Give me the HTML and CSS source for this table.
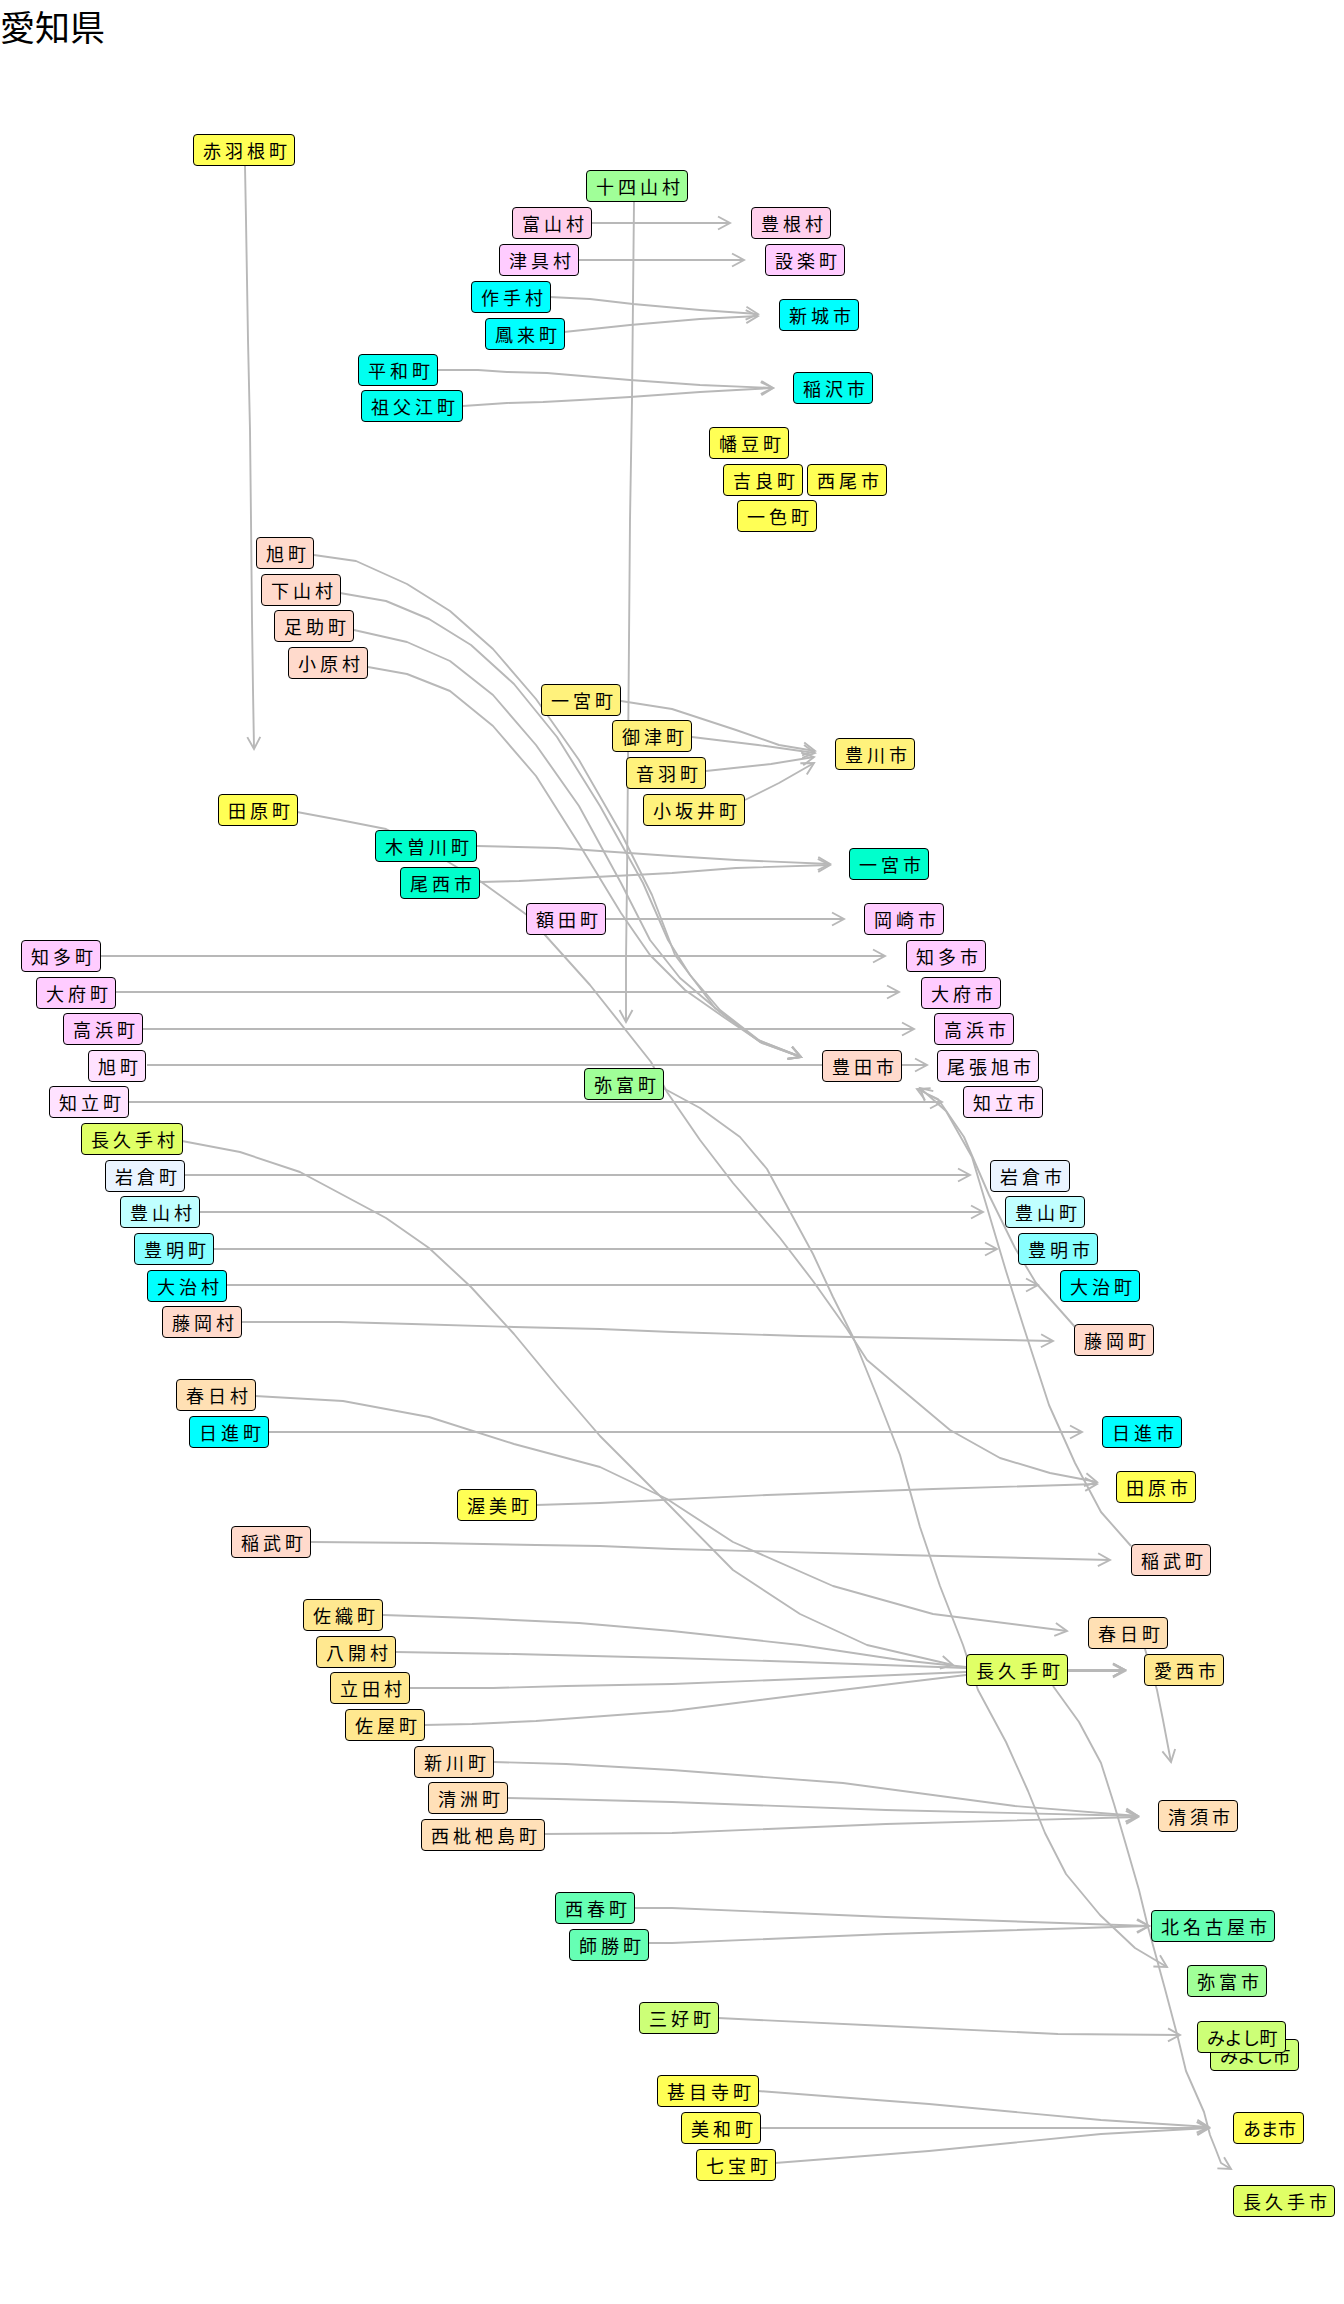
FILE: index.html
```html
<!DOCTYPE html>
<html lang="ja">
<head>
<meta charset="utf-8">
<title>愛知県</title>
<link rel="stylesheet" href="styles.css">
</head>
<body>
<div class="page">
  <h1 class="title">愛知県</h1>

  <svg class="links" width="1344" height="2304" viewBox="0 0 1344 2304" xmlns="http://www.w3.org/2000/svg">
    <defs>
      <marker id="ah" markerUnits="userSpaceOnUse" markerWidth="16" markerHeight="16" refX="13" refY="7" orient="auto" overflow="visible">
        <path class="ahp" d="M1,0.5 L13,7 L1,13.5"/>
      </marker>
    </defs>
    <polyline class="e" points="245,166 246,220 247,280 248,340 250,430 251,520 252,620 253,690 254,749"/>
    <polyline class="e" points="634,202 633,300 632,400 630,520 629,640 628,760 627,880 626,960 626,1022"/>
    <polyline class="e" points="592,223 730,223"/>
    <polyline class="e" points="578,260 744,260"/>
    <polyline class="e" points="550,297 590,299 633,304 700,310 758,314"/>
    <polyline class="e" points="564,332 630,325 700,319 758,316"/>
    <polyline class="e" points="437,370 478,370 507,372 547,373 630,380 700,385 773,388"/>
    <polyline class="e" points="463,406 507,403 543,402 580,400 630,397 700,392 773,388"/>
    <polyline class="e" points="314,555 356,561 407,584 450,611 493,649 536,699 579,760 621,833 652,895 675,955 715,1008 758,1040 801,1057"/>
    <polyline class="e" points="340,593 386,601 429,619 471,645 514,684 557,737 600,806 643,883 668,940 690,975 720,1010 760,1041 801,1057"/>
    <polyline class="e" points="354,630 407,642 450,661 493,695 536,745 579,806 621,883 650,940 680,978 720,1012 760,1042 801,1057"/>
    <polyline class="e" points="368,667 407,674 450,691 493,726 536,776 579,844 621,913 650,955 685,990 725,1018 762,1043 801,1057"/>
    <polyline class="e" points="621,701 672,709 736,730 779,745 815,751"/>
    <polyline class="e" points="692,737 758,745 815,753"/>
    <polyline class="e" points="706,771 771,764 814,757"/>
    <polyline class="e" points="745,800 779,783 814,763"/>
    <polyline class="e" points="297,812 340,820 386,829 430,851 480,881 527,915 590,985 651,1062 667,1092 700,1140 733,1183 780,1238 813,1281 847,1329 867,1360 900,1388 950,1430 1000,1458 1050,1473 1097,1482"/>
    <polyline class="e" points="477,846 557,848 672,856 736,860 830,864"/>
    <polyline class="e" points="480,882 519,881 672,873 736,868 830,865"/>
    <polyline class="e" points="606,919 844,919"/>
    <polyline class="e" points="101,956 885,956"/>
    <polyline class="e" points="114,992 899,992"/>
    <polyline class="e" points="143,1029 914,1029"/>
    <polyline class="e" points="147,1065 927,1065"/>
    <polyline class="e" points="129,1102 942,1102"/>
    <polyline class="e" points="663,1088 700,1108 740,1137 767,1169 787,1206 813,1254 833,1297 853,1337 877,1396 900,1455 920,1527 940,1586 963,1645 978,1690 1006,1742 1028,1791 1045,1833 1066,1874 1100,1915 1135,1948 1167,1967"/>
    <polyline class="e" points="182,1141 240,1152 300,1172 386,1218 429,1248 471,1287 514,1334 557,1386 600,1436 667,1503 733,1570 800,1614 867,1645 953,1665"/>
    <polyline class="e" points="185,1175 970,1175"/>
    <polyline class="e" points="199,1212 983,1212"/>
    <polyline class="e" points="213,1249 997,1249"/>
    <polyline class="e" points="227,1285 1038,1285"/>
    <polyline class="e" points="241,1322 339,1322 412,1324 514,1327 600,1329 672,1332 800,1336 1053,1341"/>
    <polyline class="e" points="1075,1327 1036,1283 1015,1248 989,1195 964,1137 938,1099 917,1089"/>
    <polyline class="e" points="1131,1546 1101,1512 1075,1463 1049,1405 1023,1325 1006,1271 989,1214 972,1157 946,1111 920,1088"/>
    <polyline class="e" points="255,1396 343,1401 429,1417 514,1444 600,1467 667,1499 733,1542 833,1586 933,1614 1067,1631"/>
    <polyline class="e" points="268,1432 1082,1432"/>
    <polyline class="e" points="536,1505 600,1503 767,1495 933,1489 1097,1484"/>
    <polyline class="e" points="311,1542 429,1543 536,1545 600,1546 672,1549 900,1555 1110,1560"/>
    <polyline class="e" points="383,1615 472,1618 579,1623 672,1631 800,1645 900,1660 966,1667 1066,1670 1125,1670"/>
    <polyline class="e" points="396,1652 514,1654 672,1658 800,1662 966,1668 1066,1670 1125,1670"/>
    <polyline class="e" points="409,1688 493,1688 566,1686 672,1684 800,1679 966,1672 1066,1670 1125,1670"/>
    <polyline class="e" points="424,1725 472,1724 536,1721 672,1711 800,1695 966,1675 1066,1671 1125,1671"/>
    <polyline class="e" points="1145,1649 1157,1690 1163,1720 1171,1762"/>
    <polyline class="e" points="494,1762 566,1764 672,1770 843,1783 1015,1806 1138,1816"/>
    <polyline class="e" points="508,1798 557,1799 672,1802 886,1810 1138,1816"/>
    <polyline class="e" points="544,1834 672,1833 886,1824 1138,1817"/>
    <polyline class="e" points="634,1908 672,1908 886,1917 1149,1926"/>
    <polyline class="e" points="648,1943 672,1943 886,1934 1149,1926"/>
    <polyline class="e" points="1053,1686 1079,1722 1101,1763 1114,1804 1126,1845 1139,1890 1148,1927 1165,1989 1178,2038 1186,2071 1204,2112 1210,2135 1216,2150 1221,2163 1231,2169"/>
    <polyline class="e" points="718,2018 886,2026 1058,2034 1180,2035"/>
    <polyline class="e" points="758,2091 929,2104 1101,2120 1209,2127"/>
    <polyline class="e" points="760,2128 1209,2128"/>
    <polyline class="e" points="775,2163 929,2151 1101,2134 1209,2128"/>
  </svg>

  <div class="n y1" style="left:193px;top:134px">赤羽根町</div>
  <div class="n g1" style="left:586px;top:170px">十四山村</div>
  <div class="n p1" style="left:512px;top:207px">富山村</div>
  <div class="n p1" style="left:751px;top:207px">豊根村</div>
  <div class="n p2" style="left:499px;top:244px">津具村</div>
  <div class="n p2" style="left:765px;top:244px">設楽町</div>
  <div class="n c1" style="left:471px;top:281px">作手村</div>
  <div class="n c1" style="left:485px;top:318px">鳳来町</div>
  <div class="n c1" style="left:779px;top:299px">新城市</div>
  <div class="n c2" style="left:358px;top:354px">平和町</div>
  <div class="n c2" style="left:361px;top:390px">祖父江町</div>
  <div class="n c2" style="left:793px;top:372px">稲沢市</div>
  <div class="n y1" style="left:709px;top:427px">幡豆町</div>
  <div class="n y1" style="left:723px;top:464px">吉良町</div>
  <div class="n y1" style="left:807px;top:464px">西尾市</div>
  <div class="n y1" style="left:737px;top:500px">一色町</div>
  <div class="n s1" style="left:256px;top:537px">旭町</div>
  <div class="n s1" style="left:261px;top:574px">下山村</div>
  <div class="n s1" style="left:274px;top:610px">足助町</div>
  <div class="n s1" style="left:288px;top:647px">小原村</div>
  <div class="n y2" style="left:541px;top:684px">一宮町</div>
  <div class="n y2" style="left:612px;top:720px">御津町</div>
  <div class="n y2" style="left:626px;top:757px">音羽町</div>
  <div class="n y2" style="left:643px;top:794px">小坂井町</div>
  <div class="n y2" style="left:835px;top:738px">豊川市</div>
  <div class="n y1" style="left:218px;top:794px">田原町</div>
  <div class="n a1" style="left:375px;top:830px">木曽川町</div>
  <div class="n a1" style="left:400px;top:867px">尾西市</div>
  <div class="n a1" style="left:849px;top:848px">一宮市</div>
  <div class="n p2" style="left:526px;top:903px">額田町</div>
  <div class="n p2" style="left:864px;top:903px">岡崎市</div>
  <div class="n p2" style="left:21px;top:940px">知多町</div>
  <div class="n p2" style="left:906px;top:940px">知多市</div>
  <div class="n p2" style="left:36px;top:977px">大府町</div>
  <div class="n p2" style="left:921px;top:977px">大府市</div>
  <div class="n p2" style="left:63px;top:1013px">高浜町</div>
  <div class="n p2" style="left:934px;top:1013px">高浜市</div>
  <div class="n p3" style="left:88px;top:1050px">旭町</div>
  <div class="n s1" style="left:822px;top:1050px">豊田市</div>
  <div class="n p3" style="left:937px;top:1050px">尾張旭市</div>
  <div class="n g1" style="left:584px;top:1068px">弥富町</div>
  <div class="n p3" style="left:49px;top:1086px">知立町</div>
  <div class="n p3" style="left:963px;top:1086px">知立市</div>
  <div class="n l1" style="left:81px;top:1123px">長久手村</div>
  <div class="n b1" style="left:105px;top:1160px">岩倉町</div>
  <div class="n b1" style="left:990px;top:1160px">岩倉市</div>
  <div class="n b2" style="left:120px;top:1196px">豊山村</div>
  <div class="n b2" style="left:1005px;top:1196px">豊山町</div>
  <div class="n b3" style="left:134px;top:1233px">豊明町</div>
  <div class="n b3" style="left:1018px;top:1233px">豊明市</div>
  <div class="n c1" style="left:147px;top:1270px">大治村</div>
  <div class="n c1" style="left:1060px;top:1270px">大治町</div>
  <div class="n s1" style="left:162px;top:1306px">藤岡村</div>
  <div class="n s1" style="left:1074px;top:1324px">藤岡町</div>
  <div class="n o1" style="left:176px;top:1379px">春日村</div>
  <div class="n c1" style="left:189px;top:1416px">日進町</div>
  <div class="n c1" style="left:1102px;top:1416px">日進市</div>
  <div class="n y1" style="left:1116px;top:1471px">田原市</div>
  <div class="n y1" style="left:457px;top:1489px">渥美町</div>
  <div class="n s1" style="left:231px;top:1526px">稲武町</div>
  <div class="n s1" style="left:1131px;top:1544px">稲武町</div>
  <div class="n o2" style="left:303px;top:1599px">佐織町</div>
  <div class="n o2" style="left:316px;top:1636px">八開村</div>
  <div class="n o2" style="left:330px;top:1672px">立田村</div>
  <div class="n o2" style="left:345px;top:1709px">佐屋町</div>
  <div class="n o1" style="left:1088px;top:1617px">春日町</div>
  <div class="n l1" style="left:966px;top:1654px">長久手町</div>
  <div class="n o2" style="left:1144px;top:1654px">愛西市</div>
  <div class="n o3" style="left:414px;top:1746px">新川町</div>
  <div class="n o3" style="left:428px;top:1782px">清洲町</div>
  <div class="n o3" style="left:421px;top:1819px">西枇杷島町</div>
  <div class="n o3" style="left:1158px;top:1800px">清須市</div>
  <div class="n m1" style="left:555px;top:1892px">西春町</div>
  <div class="n m1" style="left:569px;top:1929px">師勝町</div>
  <div class="n m1" style="left:1151px;top:1910px">北名古屋市</div>
  <div class="n g1" style="left:1187px;top:1965px">弥富市</div>
  <div class="n m2" style="left:639px;top:2002px">三好町</div>
  <div class="n m2" style="left:1210px;top:2039px"><span class="k">みよし</span>市</div>
  <div class="n m2" style="left:1197px;top:2021px"><span class="k">みよし</span>町</div>
  <div class="n y1" style="left:657px;top:2075px">甚目寺町</div>
  <div class="n y1" style="left:681px;top:2112px">美和町</div>
  <div class="n y1" style="left:696px;top:2149px">七宝町</div>
  <div class="n y1" style="left:1233px;top:2112px"><span class="k">あま</span>市</div>
  <div class="n l1" style="left:1233px;top:2185px">長久手市</div>
</div>
</body>
</html>
```

FILE: styles.css
```css
html, body {
  margin: 0;
  padding: 0;
  background: #ffffff;
}

.page {
  position: relative;
  width: 1344px;
  height: 2304px;
  overflow: hidden;
  font-family: "Noto Sans CJK JP", "Noto Sans", sans-serif;
  color: #000;
}

.title {
  margin: 0;
  font-family: "Noto Sans CJK JP", sans-serif;
  font-size: 35px;
  font-weight: normal;
  line-height: normal;
  color: #000;
}

.links {
  position: absolute;
  left: 0;
  top: 0;
}

.e {
  fill: none;
  stroke: #b8b8b8;
  stroke-width: 1.9;
  stroke-linejoin: round;
  marker-end: url(#ah);
}

.ahp {
  fill: none;
  stroke: #b8b8b8;
  stroke-width: 1.9;
}

.n {
  position: absolute;
  height: 30px;
  line-height: 30px;
  padding: 0 3px 0 9px;
  border: 1px solid #000;
  border-radius: 4px;
  font-family: "Noto Sans CJK JP", sans-serif;
  font-size: 18px;
  letter-spacing: 4px;
  white-space: nowrap;
  color: #000;
}

.k {
  letter-spacing: -0.5px;
}

.y1 { background: #ffff55; }
.y2 { background: #fff27c; }
.g1 { background: #a0ff98; }
.p1 { background: #ffd0ec; }
.p2 { background: #ffccff; }
.p3 { background: #ffe2ff; }
.c1 { background: #00ffff; }
.c2 { background: #00fff0; }
.s1 { background: #ffdacc; }
.a1 { background: #00ffcc; }
.l1 { background: #e0ff66; }
.b1 { background: #eaf4ff; }
.b2 { background: #c0ffff; }
.b3 { background: #88ffff; }
.o1 { background: #ffe0b4; }
.o2 { background: #ffe890; }
.o3 { background: #ffe0b8; }
.m1 { background: #66ffb4; }
.m2 { background: #ccff77; }
```
